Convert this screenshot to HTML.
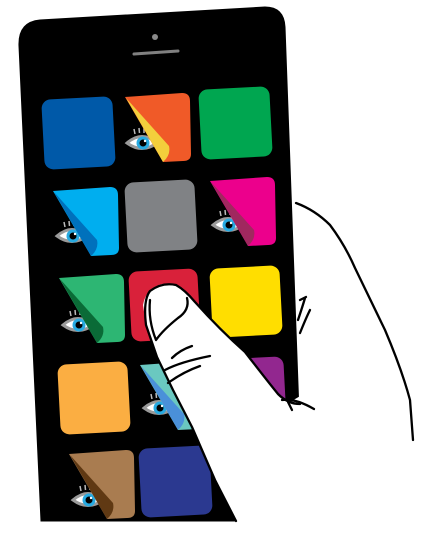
<!DOCTYPE html>
<html><head><meta charset="utf-8"><style>html,body{margin:0;padding:0;background:#fff;}svg{display:block}</style></head>
<body>
<svg width="428" height="534" viewBox="0 0 428 534" xmlns="http://www.w3.org/2000/svg">
<defs>
<g id="eye">
<path d="M-15,0 Q0,-13 15,0 Q0,11 -15,0Z" fill="#fff" stroke="#9a9a9a" stroke-width="3"/>
<circle cx="1" cy="0" r="6.5" fill="#27aae1"/>
<circle cx="1" cy="0" r="3.5" fill="#000"/>
<circle cx="3" cy="-2" r="1.2" fill="#fff"/>
<path d="M-7,-9 l-1,-5 M-2.5,-10 l-0.5,-5 M2,-10 l0,-5" stroke="#bbb" stroke-width="1.5"/>
</g>
</defs>
<path d="M40,20 L265,7 Q284,7 285,27 L300,440 L260,521 L41,521 L19,46 Q18,22 40,20Z" fill="#000" stroke="#000" stroke-width="1"/>
<circle cx="155" cy="37" r="3" fill="#8a8a8a"/>
<path d="M134,54 L178,51" stroke="#808080" stroke-width="3" stroke-linecap="round"/>

<rect x="43" y="98" width="71" height="70" rx="9" fill="#0059a8" transform="rotate(-3 78 133)"/>
<rect x="200" y="88" width="71" height="70" rx="9" fill="#00a650" transform="rotate(-3 235 123)"/>
<rect x="126" y="181" width="70" height="70" rx="9" fill="#808285" transform="rotate(-3 161 216)"/>
<rect x="130" y="270" width="69" height="70" rx="9" fill="#d9213a" transform="rotate(-3 165 305)"/>
<rect x="211" y="267" width="70" height="69" rx="9" fill="#ffde00" transform="rotate(-3 246 301)"/>
<rect x="59" y="363" width="70" height="70" rx="9" fill="#fbae42" transform="rotate(-3 94 398)"/>
<rect x="218" y="358" width="67" height="68" rx="9" fill="#92278f" transform="rotate(-3 251 392)"/>
<rect x="140" y="447" width="71" height="69" rx="9" fill="#2b3990" transform="rotate(-3 175 481)"/>

<g transform="translate(125,93)">
<use href="#eye" x="17" y="50"/>
<path d="M0,4 L57,0 Q65,0 65,8 L66,61 Q66,68 58,68 L38,69 Z" fill="#f05a28"/>
<path d="M1,5 L44,53 Q46,62 38,69 Z" fill="#f3cf3c"/>
</g>
<g transform="translate(53,188)">
<use href="#eye" x="19" y="48"/>
<path d="M0,3 L57,-1 Q65,-1 65,7 L66,60 Q66,67 58,67 L38,68 Z" fill="#00aeef"/>
<path d="M1,4 L44,52 Q46,61 38,68 Z" fill="#0071bc"/>
</g>
<g transform="translate(210,178)">
<use href="#eye" x="18" y="47"/>
<path d="M0,3 L57,-1 Q65,-1 65,7 L66,60 Q66,67 58,67 L38,68 Z" fill="#ec008c"/>
<path d="M1,4 L44,52 Q46,61 38,68 Z" fill="#a0285f"/>
</g>
<g transform="translate(59,275)">
<use href="#eye" x="19" y="50"/>
<path d="M0,3 L57,-1 Q65,-1 65,7 L66,60 Q66,67 58,67 L38,68 Z" fill="#2db673"/>
<path d="M1,4 L44,52 Q46,61 38,68 Z" fill="#0a6b37"/>
</g>
<g transform="translate(140,362)">
<use href="#eye" x="19" y="46"/>
<path d="M0,3 L57,-1 Q65,-1 65,7 L66,60 Q66,67 58,67 L38,68 Z" fill="#6ac8c0"/>
<path d="M1,4 L44,52 Q46,61 38,68 Z" fill="#4a90d9"/>
</g>
<g transform="translate(69,451)">
<use href="#eye" x="19" y="49"/>
<path d="M0,3 L57,-1 Q65,-1 65,7 L66,60 Q66,67 58,67 L38,68 Z" fill="#a97c50"/>
<path d="M1,4 L44,52 Q46,61 38,68 Z" fill="#603913"/>
</g>

<path d="M236,534 L236,521 L215,480 L192,427 L173,390 L157,357 L146,325 L143,305 Q146,288 162,284 Q178,283 186,292 L195,302 L215,322 L245,352 L265,378 L278,394 L290,402 L302,395 L302,300 L298,205 Q320,210 345,245 L385,330 L405,380 L413,440 L428,534 Z" fill="#fff"/>
<g fill="none" stroke="#000" stroke-width="2.3" stroke-linecap="round" stroke-linejoin="round">
<path d="M236,521 L215,480 L192,427 L173,390 L157,357 L146,325 Q143,300 150,291 Q162,282 176,285 Q185,290 195,302 Q220,330 245,352 Q265,378 278,394 Q288,404 300,404"/>
<path d="M296,203 Q315,210 330,225 Q345,245 355,268 L385,330 Q402,370 410,400 L413,440"/>
<path d="M150,300 Q148,320 156,340 Q163,330 178,318 Q190,310 187,298"/>
<path d="M282,400 Q295,398 314,409"/>
<path d="M288,402 L292,410"/>
<path d="M165,370 Q180,362 210,356"/>
<path d="M168,383 Q183,372 200,366"/>
<path d="M172,358 Q180,350 192,346"/>
<path d="M298,320 Q303,305 305,298"/>
<path d="M300,333 Q306,318 310,310"/>
<path d="M300,300 L306,297"/>
</g>
</svg>
</body></html>
